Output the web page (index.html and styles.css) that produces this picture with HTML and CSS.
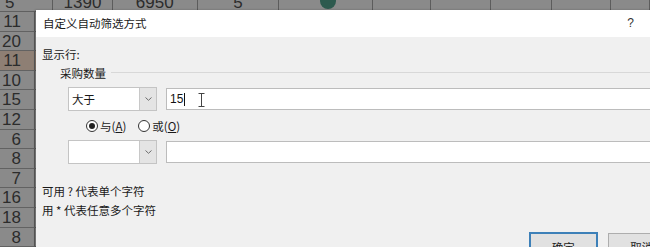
FILE: index.html
```html
<!DOCTYPE html>
<html lang="zh">
<head>
<meta charset="utf-8">
<link rel="stylesheet" href="styles.css">
</head>
<body>
<div class="sheet">
  <div class="toprow">
    <div class="tc c1">5</div>
    <div class="tc c2">1390</div>
    <div class="tc c3">6950</div>
    <div class="tc c4">5</div>
    <div class="tc c5"><span class="dot"></span></div>
    <div class="tc c6"></div>
    <div class="tc c7"></div>
    <div class="tc c8"></div>
    <div class="tc c9"></div>
    <div class="tc c10"></div>
  </div>
  <div class="row"><div class="cell">11</div></div>
  <div class="row"><div class="cell">20</div></div>
  <div class="row hl"><div class="cell">11</div></div>
  <div class="row"><div class="cell">10</div></div>
  <div class="row"><div class="cell">15</div></div>
  <div class="row"><div class="cell">12</div></div>
  <div class="row"><div class="cell">6</div></div>
  <div class="row"><div class="cell">8</div></div>
  <div class="row"><div class="cell">7</div></div>
  <div class="row"><div class="cell">16</div></div>
  <div class="row"><div class="cell">18</div></div>
  <div class="row"><div class="cell">8</div></div>
</div>

<div class="dialog">
  <div class="titlebar">
    <span class="title">自定义自动筛选方式</span>
    <span class="help">?</span>
  </div>
  <div class="dbody">
    <div class="label">显示行:</div>
    <div class="group">
      <span class="glabel">采购数量</span>
      <span class="rule"></span>
    </div>
    <div class="crow first">
      <div class="combo">
        <span class="cval">大于</span>
        <span class="drop"><svg width="7" height="4" viewBox="0 0 7 4"><path d="M0.5 0.5 L3.5 3.3 L6.5 0.5" fill="none" stroke="#6d6d6d" stroke-width="1"/></svg></span>
      </div>
      <div class="input">
        <span class="ival">15</span><span class="caret"></span>
        <svg class="ibeam" width="7" height="14" viewBox="0 0 7 14"><path d="M0.5 0.5 H6.5 M3.5 0.5 V13.5 M0.5 13.5 H6.5" fill="none" stroke="#444" stroke-width="1"/></svg>
      </div>
    </div>
    <div class="radios">
      <label class="radio"><span class="circle on"></span><span>与(<u>A</u>)</span></label>
      <label class="radio"><span class="circle"></span><span>或(<u>O</u>)</span></label>
    </div>
    <div class="crow second">
      <div class="combo">
        <span class="cval"></span>
        <span class="drop"><svg width="7" height="4" viewBox="0 0 7 4"><path d="M0.5 0.5 L3.5 3.3 L6.5 0.5" fill="none" stroke="#6d6d6d" stroke-width="1"/></svg></span>
      </div>
      <div class="input"></div>
    </div>
    <div class="hints">
      <div>可用 ? 代表单个字符</div>
      <div>用 * 代表任意多个字符</div>
    </div>
    <div class="buttons">
      <div class="btn ok">确定</div>
      <div class="btn">取消</div>
    </div>
  </div>
</div>
</body>
</html>
```

FILE: styles.css
```css
html, body {
  margin: 0;
  padding: 0;
  overflow: hidden;
  width: 650px;
  height: 247px;
  background: #8a8a8a;
}

body {
  position: relative;
  font-family: "Noto Sans CJK SC", "Noto Sans", sans-serif;
}

/* spreadsheet */
.sheet {
  margin-top: -8px;
  display: flex;
  flex-direction: column;
  font-family: "Liberation Sans", Arial, sans-serif;
  font-size: 17px;
  color: #2c2c2c;
}

.toprow {
  display: flex;
  height: 19px;
  border-bottom: 1px solid #606060;
}

.tc {
  height: 19px;
  line-height: 21px;
  border-right: 1px solid #5c5c5c;
  text-align: center;
  box-sizing: border-box;
  position: relative;
}

.c1 { width: 55px; text-align: left; padding-left: 5px; }
.c2 { width: 62px; }
.c3 { width: 88px; }
.c4 { width: 85px; }
.c5 { width: 97px; }
.c6 { width: 61px; }
.c7 { width: 62px; }
.c8 { width: 63px; }
.c9 { width: 62px; }
.c10 { width: 40px; }

.dot {
  position: absolute;
  left: 41px;
  top: 1px;
  width: 16px;
  height: 16px;
  border-radius: 50%;
  background: #2d5a4e;
}

.row {
  display: flex;
  height: 19.6px;
  border-bottom: 1px solid #626262;
  box-sizing: border-box;
}

.row.hl { background: #8e7f74; }

.cell {
  width: 35px;
  box-sizing: border-box;
  border-right: 1px solid #5a5a5a;
  text-align: right;
  padding-right: 13px;
  line-height: 19px;
}

/* dialog */
.dialog {
  position: absolute;
  left: 36px;
  top: 10px;
  width: 640px;
  height: 260px;
  background: #f0f0f0;
  color: #1a1a1a;
  font-size: 11.5px;
  box-shadow: -1px 0 2px rgba(0,0,0,0.25);
}

.titlebar {
  height: 27px;
  background: #ffffff;
  display: flex;
  align-items: center;
  justify-content: space-between;
  padding: 0 42px 0 7px;
  line-height: 27px;
  font-size: 11.5px;
}

.help {
  font-family: "Liberation Sans", sans-serif;
  font-size: 12px;
  color: #333;
}

.dbody {
  padding: 9px 0 0 6px;
  display: flex;
  flex-direction: column;
}

.label {
  line-height: 16px;
  height: 16px;
}

.group {
  margin-top: 3px;
  margin-left: 18px;
  display: flex;
  align-items: center;
  height: 16px;
  line-height: 16px;
}

.rule {
  flex: 1;
  height: 1px;
  background: #d8d8d8;
  margin-left: 5px;
  margin-top: -1px;
}

.crow {
  display: flex;
  align-items: center;
  margin-left: 26px;
  gap: 9px;
  height: 24px;
}

.crow.first { margin-top: 6px; }
.crow.second { margin-top: 6px; }

.combo {
  width: 89px;
  height: 24px;
  box-sizing: border-box;
  border: 1px solid #c4c4c4;
  background: #ffffff;
  display: flex;
}

.cval {
  flex: 1;
  line-height: 22px;
  padding-left: 3px;
}

.drop {
  width: 16px;
  background: #e4e4e4;
  border-left: 1px solid #c8c8c8;
  display: flex;
  align-items: center;
  justify-content: center;
}

.input {
  flex: 1;
  height: 22px;
  box-sizing: border-box;
  border: 1px solid #bcbcbc;
  background: #ffffff;
  display: flex;
  align-items: center;
  padding-left: 3px;
  position: relative;
}

.ival {
  font-family: "Liberation Sans", sans-serif;
  font-size: 12px;
  color: #111;
}

.caret {
  width: 1px;
  height: 13px;
  background: #111;
  margin-left: 1px;
}

.ibeam {
  position: absolute;
  left: 31px;
  top: 4px;
}

.radios {
  margin-top: 7px;
  margin-left: 44px;
  display: flex;
  gap: 12px;
  height: 16px;
  line-height: 16px;
}

.radio {
  display: flex;
  align-items: center;
  gap: 2px;
}

.circle {
  width: 12px;
  height: 12px;
  box-sizing: border-box;
  border: 1px solid #333;
  border-radius: 50%;
  background: #fff;
  position: relative;
}

.circle.on::after {
  content: "";
  position: absolute;
  left: 2px;
  top: 2px;
  width: 6px;
  height: 6px;
  border-radius: 50%;
  background: #222;
}

.hints {
  margin-top: 18px;
  line-height: 19px;
}

.buttons {
  margin-top: 12px;
  padding-left: 487px;
  display: flex;
  gap: 10px;
}

.btn {
  width: 75px;
  height: 23px;
  box-sizing: border-box;
  border: 1px solid #adadad;
  background: #e1e1e1;
  text-align: center;
  line-height: 26px;
  font-size: 11.5px;
  margin-top: 1px;
}

.btn.ok {
  border: 2px solid #3d80b8;
  margin-top: 0;
}
```
